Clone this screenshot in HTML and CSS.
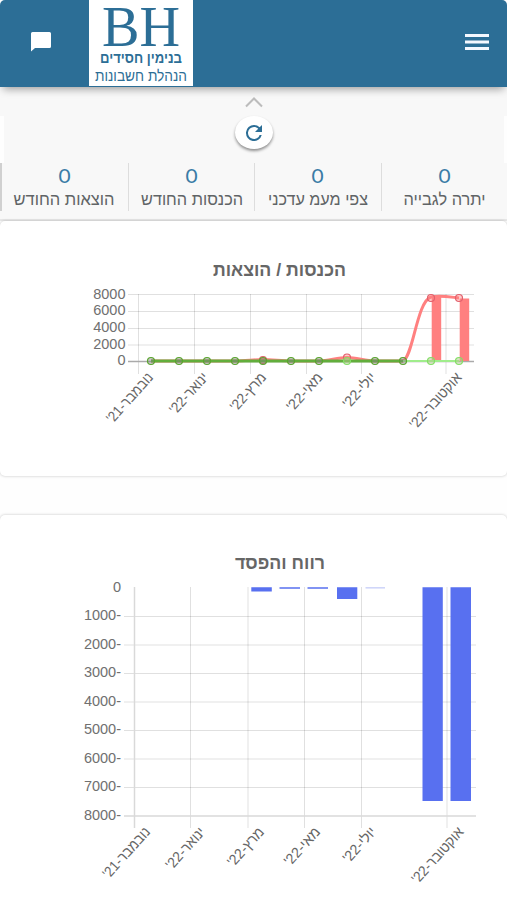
FILE: index.html
```
<!DOCTYPE html>
<html lang="he" dir="rtl">
<head>
<meta charset="utf-8">
<title>בנימין חסידים</title>
<link rel="stylesheet" href="styles.css">
</head>
<body>
<header class="topbar">
  <svg class="menu" viewBox="0 0 24 18"><path d="M0 1h24v3H0zM0 7.5h24v3H0zM0 14h24v3H0z"/></svg>
  <svg class="logo" viewBox="0 0 104 86">
    <text class="logo-mark" x="13" y="46" textLength="78" lengthAdjust="spacingAndGlyphs">BH</text>
    <text class="logo-name" x="93" y="62.500" textLength="82" lengthAdjust="spacingAndGlyphs">בנימין חסידים</text>
    <text class="logo-sub" x="98" y="80.500" textLength="92" lengthAdjust="spacingAndGlyphs">הנהלת חשבונות</text>
  </svg>
  <svg class="chat" viewBox="0 0 20 20"><path d="M1.500 0h17Q20 0 20 1.500v13Q20 16 18.500 16H4L0 19.500V1.500Q0 0 1.500 0z"/></svg>
</header>
<section class="summary">
  <svg class="chevron" viewBox="0 0 20 12"><path d="M2 10.500L10 2.500L18 10.500"/></svg>
  <div class="refresh-row">
    <span class="edge edge-end"></span>
    <button class="refresh"><svg viewBox="0 0 24 24"><path d="M17.650 6.350A7.958 7.958 0 0 0 12 4a8 8 0 1 0 7.730 10h-2.080A6 6 0 1 1 12 6c1.660 0 3.140.690 4.220 1.780L13 11h7V4z"/></svg></button>
    <span class="edge"></span>
  </div>
  <div class="tiles">
    <div class="tile"><b>0</b><svg class="label" viewBox="0 0 126 22"><text x="103.500" y="17" textLength="82" lengthAdjust="spacingAndGlyphs">יתרה לגבייה</text></svg></div>
    <div class="tile"><b>0</b><svg class="label" viewBox="0 0 126 22"><text x="113" y="17" textLength="100" lengthAdjust="spacingAndGlyphs">צפי מעמ עדכני</text></svg></div>
    <div class="tile"><b>0</b><svg class="label" viewBox="0 0 126 22"><text x="114" y="17" textLength="102" lengthAdjust="spacingAndGlyphs">הכנסות החודש</text></svg></div>
    <div class="tile"><b>0</b><svg class="label" viewBox="0 0 126 22"><text x="112.500" y="17" textLength="101" lengthAdjust="spacingAndGlyphs">הוצאות החודש</text></svg></div>
  </div>
</section>
<main>
  <section class="card card-income">
    <svg class="chart" viewBox="0 221 507 255">
      <text class="title" x="346" y="275.500" textLength="133" lengthAdjust="spacingAndGlyphs">הכנסות / הוצאות</text>
      <path class="grid" d="M128 294.500H474M128 311.500H474M128 328.500H474M128 345H474M138.500 294V374M194.500 294V374M250.500 294V374M306.500 294V374M361.500 294V374M446 294V374"/>
      <path class="axis" d="M128 361.500H474"/>
      <g class="ticks"><text x="125.500" y="298.500">8000</text><text x="125.500" y="315.300">6000</text><text x="125.500" y="332">4000</text><text x="125.500" y="348.700">2000</text><text x="125.500" y="365">0</text></g>
      <path class="expense-bar" d="M431.700 297h9.500v64h-9.500zM459.700 298.500h9.500V361h-9.500z"/>
      <path class="expense" d="M151 361H235C245 361 254 359.500 263 359.500S282 361 291 361H319C329 361 337 357.500 347 357.500S365 361 375 361H403C413 357 417 301 431 297C440 295 450 297 459 298"/>
      <g class="expense-dot"><circle cx="263" cy="360" r="3.500"/><circle cx="347" cy="357.500" r="3.500"/><circle cx="431" cy="298" r="3.500"/><circle cx="459" cy="298" r="3.500"/></g>
      <path class="income" d="M151 361H403"/>
      <path class="income-light" d="M403 361H459"/>
      <g class="income-dot"><circle cx="151" cy="361" r="3.500"/><circle cx="179" cy="361" r="3.500"/><circle cx="207" cy="361" r="3.500"/><circle cx="235" cy="361" r="3.500"/><circle cx="263" cy="361" r="3.500"/><circle cx="291" cy="361" r="3.500"/><circle cx="319" cy="361" r="3.500"/><circle class="light" cx="347" cy="361" r="3.500"/><circle cx="375" cy="361" r="3.500"/><circle cx="403" cy="361" r="3.500"/><circle class="light" cx="431" cy="361" r="3.500"/><circle class="light" cx="459" cy="361" r="3.500"/></g>
      <g class="months">
        <text transform="translate(154 378) rotate(-48)" textLength="62" lengthAdjust="spacingAndGlyphs">נובמבר-21'</text>
        <text transform="translate(209 378) rotate(-48)" textLength="50" lengthAdjust="spacingAndGlyphs">ינואר-22'</text>
        <text transform="translate(267 378) rotate(-48)" textLength="46" lengthAdjust="spacingAndGlyphs">מרץ-22'</text>
        <text transform="translate(323.500 378) rotate(-48)" textLength="46" lengthAdjust="spacingAndGlyphs">מאי-22'</text>
        <text transform="translate(377 378) rotate(-48)" textLength="42" lengthAdjust="spacingAndGlyphs">יולי-22'</text>
        <text transform="translate(462.500 378) rotate(-48)" textLength="70" lengthAdjust="spacingAndGlyphs">אוקטובר-22'</text>
      </g>
    </svg>
  </section>
  <section class="card card-profit">
    <svg class="chart" viewBox="0 515 507 385">
      <text class="title" x="325" y="569" textLength="90" lengthAdjust="spacingAndGlyphs">רווח והפסד</text>
      <path class="grid" d="M124 616.500H476M124 645H476M124 673.500H476M124 702H476M124 730.500H476M124 759H476M124 787.500H476M190.500 587V828M248 587V828M304.500 587V828M361.500 587V828M447 587V828"/>
      <path class="axis-light" d="M124 816H476M134.500 587V828"/>
      <g class="ticks"><text x="121" y="591.500">0</text><text x="121" y="620">-1000</text><text x="121" y="648.500">-2000</text><text x="121" y="677">-3000</text><text x="121" y="705.500">-4000</text><text x="121" y="734">-5000</text><text x="121" y="762.500">-6000</text><text x="121" y="791">-7000</text><text x="121" y="819.500">-8000</text></g>
      <path class="profit" d="M251.300 587.200h20.500v4.300h-20.500zM279.500 587.200H300v1.600h-20.500zM307.500 587.200H328v1.600h-20.500zM337 587.200h20.300V599H337zM422.500 587.200h20.300V801h-20.300zM450.500 587.200H471V801h-20.500z"/>
      <path class="profit-faint" d="M365.500 587.200H385v1.300h-19.500z"/>
      <g class="months">
        <text transform="translate(151 832.500) rotate(-48)" textLength="63" lengthAdjust="spacingAndGlyphs">נובמבר-21'</text>
        <text transform="translate(206 832.500) rotate(-48)" textLength="51" lengthAdjust="spacingAndGlyphs">ינואר-22'</text>
        <text transform="translate(265 832.500) rotate(-48)" textLength="47" lengthAdjust="spacingAndGlyphs">מרץ-22'</text>
        <text transform="translate(321 832.500) rotate(-48)" textLength="46" lengthAdjust="spacingAndGlyphs">מאי-22'</text>
        <text transform="translate(377 832.500) rotate(-48)" textLength="42" lengthAdjust="spacingAndGlyphs">יולי-22'</text>
        <text transform="translate(464.500 832.500) rotate(-48)" textLength="70" lengthAdjust="spacingAndGlyphs">אוקטובר-22'</text>
      </g>
    </svg>
  </section>
</main>
</body>
</html>
```
FILE: styles.css
```
* { box-sizing: border-box; }
body { margin: 0; height: 900px; overflow: hidden; background: #fefefe; font-family: "Open Sans", "Liberation Sans", sans-serif; }
svg { display: block; }
text { direction: rtl; }
.topbar { position: relative; display: flex; align-items: flex-start; height: 87px; background: #2c6e96; border-radius: 5px 5px 0 0; box-shadow: 0 5px 9px -3px rgba(0,0,0,.38); }
.menu { width: 24px; height: 18px; margin: 33px 18px 0 272px; fill: #f4f8ff; }
.logo { width: 104px; height: 86px; background: #fff; fill: #2c6e96; overflow: visible; }
.logo-mark { direction: ltr; font: 58px "Liberation Serif", serif; }
.logo-name { font: bold 14.500px "Liberation Sans", sans-serif; }
.logo-sub { font: 15.500px "Liberation Sans", sans-serif; }
.chat { width: 20px; height: 20px; margin: 32px 38px 0 0; fill: #fff; }
.summary { height: 134px; padding-top: 9px; background: #f8f8f8; border-bottom: 2px solid #e8e8e8; }
.chevron { width: 20px; height: 12px; margin: 0 auto; fill: none; stroke: #bcbcbc; stroke-width: 2; }
.refresh-row { display: flex; justify-content: space-between; height: 55px; }
.edge { width: 4px; height: 47px; margin-top: 8px; background: #fefefe; }
.edge-end { width: 3px; }
.refresh { width: 38px; height: 33px; margin-top: 8px; padding: 0; border: 0; border-radius: 50%; background: #fff; box-shadow: 0 2px 3px rgba(0,0,0,.42); }
.refresh svg { width: 24px; height: 24px; margin: 0 auto; fill: #2c6e96; }
.tiles { display: grid; grid-template-columns: 126px 127px 126px 128px; height: 48px; }
.tile { display: flex; flex-direction: column; align-items: center; border-left: 1px solid #ddd; }
.tile:last-child { border-left: 2px solid #d0d0d0; }
.tile b { height: 25px; color: #3a7ca6; font: 19px/25px Lato, sans-serif; transform: scaleX(1.1); }
.label { width: 126px; height: 22px; fill: #606466; font: 17px "Liberation Sans", sans-serif; }
main { display: flex; flex-direction: column; gap: 39px; }
.card { background: #fff; box-shadow: 0 0 3px rgba(0,0,0,.24); }
.card-income { height: 255px; border-radius: 5px; }
.card-profit { height: 385px; border-radius: 5px 5px 0 0; }
.chart { width: 507px; height: 100%; font-family: "Liberation Sans", sans-serif; fill: #666; }
.title { font-size: 18.500px; font-weight: bold; }
.ticks { font-size: 14.500px; fill: #707070; }
.months { font-size: 14.500px; }
.grid { stroke: #000; stroke-opacity: .12; fill: none; }
.axis { stroke: #aaa; stroke-width: 1.500; }
.axis-light { stroke: #d9d9d9; stroke-width: 1.500; fill: none; }
.expense { fill: none; stroke: #ff8080; stroke-width: 3; }
.expense-bar { fill: #ff8080; }
.expense-dot { fill: #ff808066; stroke: #e2606c; stroke-width: 1.200; }
.income { stroke: #62ae3c; stroke-width: 3; }
.income-light { stroke: #a0ed8c; stroke-width: 2; }
.income-dot { fill: #80808070; stroke: #59a52c; stroke-width: 1.200; }
.light { stroke: #83df65; fill: #b0c98b80; }
.profit { fill: #5870f0; }
.profit-faint { fill: #c4ccf8; }
```
